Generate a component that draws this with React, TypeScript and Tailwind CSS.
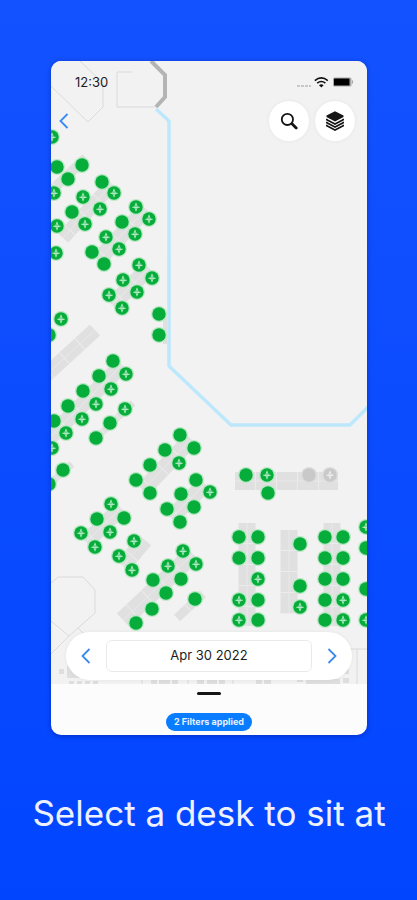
import { useState } from "react";

type DeskKind = "free" | "equipped" | "taken" | "takenEquipped";

interface Desk {
  x: number;
  y: number;
  kind: DeskKind;
}

const toDesks = (kind: DeskKind, points: number[][]): Desk[] =>
  points.map(([x, y]) => ({ x, y, kind }));

const desks: Desk[] = [
  ...toDesks("free", [
    [57, 167], [82, 165], [68, 179], [102, 182], [72, 212], [122, 222], [92, 252], [104, 264],
    [159, 314], [159, 335], [49, 335],
    [113, 361], [99, 376], [83, 391], [68, 406], [54, 421], [110, 423], [96, 438], [63, 470], [49, 484],
    [180, 435], [194, 448], [165, 450], [150, 465], [136, 480], [150, 493], [196, 480], [181, 494],
    [167, 509], [194, 507], [180, 522],
    [97, 519], [124, 518], [181, 579], [153, 580], [166, 593], [152, 609], [136, 623], [195, 599],
    [246, 475], [268, 493],
    [239, 537], [258, 537], [239, 558], [258, 558], [258, 600], [258, 620],
    [300, 544], [300, 586],
    [325, 537], [343, 537], [325, 558], [343, 558], [325, 579], [343, 579], [325, 600], [325, 620],
    [366, 548], [366, 589],
  ]),
  ...toDesks("equipped", [
    [52, 137], [54, 193], [114, 193], [83, 197], [100, 209], [136, 207], [149, 219], [57, 226],
    [85, 224], [135, 234], [106, 237], [119, 249], [56, 253],
    [139, 265], [152, 278], [123, 280], [137, 292], [109, 295], [122, 308], [61, 319],
    [126, 374], [111, 389], [96, 404], [82, 419], [66, 433], [52, 448], [125, 409],
    [179, 463], [210, 492],
    [111, 504], [81, 533], [110, 532], [95, 547], [134, 541], [119, 556], [132, 570],
    [183, 551], [196, 564], [168, 566],
    [267, 475], [258, 579], [239, 600], [239, 620], [300, 607], [343, 600], [343, 620],
    [366, 527], [366, 620],
  ]),
  ...toDesks("taken", [[309, 475]]),
  ...toDesks("takenEquipped", [[330, 475]]),
];

// table rows: x1, y1, x2, y2, thickness
const tables = [
  [86, 158, 52, 190, 10],
  [112, 184, 63, 238, 14],
  [146, 209, 98, 260, 16],
  [149, 268, 112, 305, 16],
  [95, 330, 46, 375, 15],
  [122, 365, 48, 439, 16],
  [133, 403, 93, 441, 7],
  [72, 464, 50, 483, 7],
  [191, 439, 143, 490, 16],
  [205, 484, 171, 518, 16],
  [121, 508, 86, 542, 16],
  [145, 540, 123, 566, 16],
  [193, 554, 123, 620, 18],
  [203, 594, 177, 618, 9],
  [165, 312, 165, 344, 4],
  [235, 481, 338, 481, 18],
  [247, 523, 247, 626, 17],
  [289, 530, 289, 614, 17],
  [332, 523, 332, 626, 17],
];

const DeskMarker = ({ x, y, kind }: Desk) => {
  const taken = kind === "taken" || kind === "takenEquipped";
  const equipped = kind === "equipped" || kind === "takenEquipped";

  return (
    <g transform={`translate(${x} ${y})`}>
      <circle r="8" fill={taken ? "#dedede" : "#b9e8c5"} />
      <circle r="6.7" fill={taken ? "#c9c9c9" : "#06ad3b"} />
      {equipped && (
        <g fill="none" stroke={taken ? "#f1f1f1" : "#c4efd0"}>
          <path d="M0 -4.2V4.2M-3.6 0.3H3.6" strokeWidth="1" />
          <path d="M0 -3L2 0L0 3L-2 0Z" strokeWidth="0.6" />
        </g>
      )}
    </g>
  );
};

const FloorMap = () => (
  <svg viewBox="51 61 316 623" className="block w-full bg-[#f2f2f2]" role="img" aria-label="Floor map">
    <g fill="none" stroke="#dadada" strokeWidth="1">
      <path d="M51 86L88 122L103 107V83L80 61" />
      <path d="M132 72H117V107H155" />
      <path d="M51 583L58 577H83L95 590V613L69 636L51 621" />
      <path d="M69 636L51 654M78 628L92 642" />
      <path d="M350 649H367M357 649V684M142 676V684M188 676V684M233 676V684" />
    </g>
    <g fill="#dedede">
      <path d="M69 681H74V684H69ZM77 681H82V684H77ZM85 681H90V684H85ZM93 681H98V684H93Z" />
      <path d="M151 680H157V684H151ZM159 679H170V684H159ZM172 680H178V684H172Z" />
      <path d="M197 680H204V684H197ZM207 679H217V684H207ZM219 680H225V684H219Z" />
      <path d="M256 680H262V684H256ZM264 680H271V684H264ZM297 680H303V682H297ZM306 679H340V684H306ZM343 678H349V683H343Z" />
      <path d="M59 669H64V674H59ZM67 666H90V678H67ZM344 669H349V674H344Z" />
    </g>
    <path d="M151 61L165 75V97L156 107" fill="none" stroke="#b4b4b4" strokeWidth="4" />
    <path
      d="M156 109L169 121V366L231 425H350L368 407"
      fill="none"
      stroke="#bde8fc"
      strokeWidth="3.5"
      strokeLinejoin="round"
    />
    {tables.map(([x1, y1, x2, y2, width]) => (
      <g key={`${x1}-${y1}`}>
        <line x1={x1} y1={y1} x2={x2} y2={y2} stroke="#e0e0e0" strokeWidth={width} />
        <line x1={x1} y1={y1} x2={x2} y2={y2} stroke="#ececec" strokeWidth={width} strokeDasharray="1 20" strokeDashoffset="-20" />
        {width > 12 && <line x1={x1} y1={y1} x2={x2} y2={y2} stroke="#e9e9e9" strokeWidth="1" />}
      </g>
    ))}
    {desks.map((desk) => (
      <DeskMarker key={`${desk.x}-${desk.y}`} {...desk} />
    ))}
  </svg>
);

const StatusBar = () => (
  <div className="flex items-center justify-between pl-6 pr-3">
    <span className="text-[13px] leading-[18px] text-[#1c1c1c]">12:30</span>
    <svg width="58" height="14" viewBox="0 0 58 14" aria-hidden="true">
      <path d="M0 11H3M4 11H7M8 11H11M12 11H14" stroke="#c8c8c8" strokeWidth="2" />
      <g fill="none" stroke="#111" strokeWidth="1.6">
        <path d="M17.8 5.6Q24.3 0.2 30.8 5.6" />
        <path d="M20.2 8.2Q24.3 4.8 28.4 8.2" />
      </g>
      <path d="M22 10.2Q24.3 8.4 26.6 10.2L24.3 12.4Z" fill="#111" />
      <rect x="36" y="2.5" width="18.5" height="9" rx="1.5" fill="#a8a8a8" />
      <rect x="37" y="3.5" width="15.5" height="7" rx="0.5" fill="#000" />
      <path d="M55 4.8Q57.4 7 55 9.2Z" fill="#a8a8a8" />
    </svg>
  </div>
);

const SearchIcon = () => (
  <svg width="18" height="18" viewBox="0 0 18 18" fill="none" stroke="#151515">
    <circle cx="7.4" cy="7.4" r="5.6" strokeWidth="1.8" />
    <path d="M12 11.8L16.2 16" strokeWidth="2.8" strokeLinecap="round" />
  </svg>
);

const LayersIcon = () => (
  <svg width="20" height="20" viewBox="0 0 20 20">
    <path d="M10 0.2L18.5 4.6V6L10 10.4L1.5 6V4.6Z" fill="#151515" />
    <g fill="none" stroke="#151515" strokeWidth="1.6">
      <path d="M1.8 7.8V8.8L10 13L18.2 8.8V7.8" />
      <path d="M1.8 10.8V11.8L10 16L18.2 11.8V10.8" />
      <path d="M1.8 13.8V14.8L10 19L18.2 14.8V13.8" />
    </g>
  </svg>
);

const Chevron = ({ direction }: { direction: "left" | "right" }) => (
  <svg width="10" height="16" viewBox="0 0 10 16" fill="none" stroke="#3a8af2" strokeWidth="1.8">
    <path d={direction === "left" ? "M8.5 1L1.5 8L8.5 15" : "M1.5 1L8.5 8L1.5 15"} />
  </svg>
);

const dates = ["Apr 29 2022", "Apr 30 2022", "May 1 2022"];

const App = () => {
  const [day, setDay] = useState(1);

  return (
    <div
      className="min-h-screen bg-linear-to-b from-[#1352ff] to-[#0245ff] pt-[61px] pr-[50px] pb-16 pl-[51px]"
      style={{ fontFamily: 'Inter, "Open Sans", sans-serif' }}
    >
      <main className="mx-auto max-w-md overflow-hidden rounded-[10px] bg-[#fcfcfc] shadow-[0_1px_5px_rgba(0,0,80,0.35)]">
        <section className="relative">
          <FloorMap />
          <header className="absolute inset-x-0 top-0 pt-3">
            <StatusBar />
            <div className="mt-2.5 flex items-center gap-1.5 pr-3 pl-2">
              <button type="button" aria-label="Back" className="mr-auto">
                <Chevron direction="left" />
              </button>
              <button
                type="button"
                aria-label="Search"
                className="flex size-10 items-center justify-center rounded-full bg-white shadow-[0_0_4px_rgba(0,0,0,0.06)]"
              >
                <SearchIcon />
              </button>
              <button
                type="button"
                aria-label="Layers"
                className="flex size-10 items-center justify-center rounded-full bg-white shadow-[0_0_4px_rgba(0,0,0,0.06)]"
              >
                <LayersIcon />
              </button>
            </div>
          </header>
          <div className="absolute inset-x-[15px] bottom-1 flex h-12 items-center rounded-full bg-white shadow-[0_0_4px_rgba(0,0,0,0.06)]">
            <button
              type="button"
              aria-label="Previous day"
              className="flex w-10 justify-center"
              onClick={() => setDay(Math.max(0, day - 1))}
            >
              <Chevron direction="left" />
            </button>
            <button
              type="button"
              className="h-8 flex-1 rounded-md border border-[#e9e9e9] text-[13px] text-[#1c1c1c]"
            >
              {dates[day]}
            </button>
            <button
              type="button"
              aria-label="Next day"
              className="flex w-10 justify-center"
              onClick={() => setDay(Math.min(dates.length - 1, day + 1))}
            >
              <Chevron direction="right" />
            </button>
          </div>
        </section>
        <section className="flex h-[51px] flex-col items-center justify-between pt-2 pb-1">
          <div className="h-[3px] w-6 rounded-full bg-[#151515]" />
          <button
            type="button"
            className="h-[18px] rounded-full bg-[#0a7cff] px-2 text-[9px] leading-4 font-bold text-[#e6f2ff]"
          >
            2 Filters applied
          </button>
        </section>
      </main>
      <h1 className="-mx-8 mt-14 text-center text-[35px] leading-[44px] text-[#eef1ff]">Select a desk to sit at</h1>
    </div>
  );
};

export default App;
